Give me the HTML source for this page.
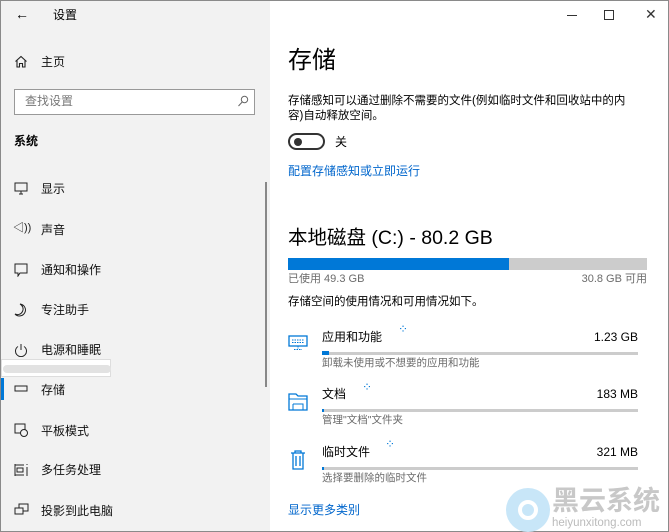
<!DOCTYPE html>
<html><head><meta charset="utf-8"><style>
*{margin:0;padding:0;box-sizing:border-box}
body{width:669px;height:532px;overflow:hidden;font-family:"Liberation Sans","Noto Sans CJK SC",sans-serif;color:#000;position:relative;background:#fff}
.win{position:absolute;left:0;top:0;width:669px;height:532px;border:1px solid #8a8a8a}
.left{position:absolute;left:1px;top:1px;width:269px;height:530px;background:#f2f2f2}
.right{position:absolute;left:270px;top:1px;width:398px;height:530px;background:#fff}
.t{position:absolute;white-space:nowrap;line-height:1}
.nav{font-size:12px;color:#111}
.ic{position:absolute}
.gray{color:#6b6b6b}
.blue{color:#0066cc}
</style></head><body>
<div class="win"></div>
<div class="left">
 <div class="t" style="left:14px;top:6px;font-size:14px">&#8592;</div>
 <div class="t" style="left:52px;top:8px;font-size:12px">设置</div>
 <svg class="ic" style="left:13px;top:54px" width="14" height="13"><path d="M1.5 6.5L7 1.5 12.5 6.5M3 5.5V12H5.5V8.5H8.5V12H11V5.5" fill="none" stroke="#222" stroke-width="1.1"/></svg>
 <div class="t nav" style="left:40px;top:55px">主页</div>
 <div style="position:absolute;left:13px;top:88px;width:241px;height:26px;border:1.5px solid #999;background:#fff"></div>
 <div class="t" style="left:24px;top:94px;font-size:12px;color:#777">查找设置</div>
 <svg class="ic" style="left:236px;top:94px" width="12" height="13"><circle cx="7.5" cy="4.5" r="3.2" fill="none" stroke="#666"/><path d="M5.2 7L1.5 11" stroke="#666"/></svg>
 <div class="t" style="left:13px;top:134px;font-size:12px;font-weight:bold">系统</div>
 <svg class="ic" style="left:13px;top:181px" width="14" height="13"><rect x="1" y="1" width="12" height="8" fill="none" stroke="#222"/><path d="M7 9V12M5 12H9" stroke="#222"/></svg>
 <div class="t nav" style="left:40px;top:182px">显示</div>
 <div class="t" style="left:12px;top:222px;font-size:11px;color:#222">&#9665;))</div>
 <div class="t nav" style="left:40px;top:223px">声音</div>
 <svg class="ic" style="left:13px;top:262px" width="14" height="14"><path d="M1 1H13V10H6L4 13V10H1Z" fill="none" stroke="#222"/></svg>
 <div class="t nav" style="left:40px;top:263px">通知和操作</div>
 <svg class="ic" style="left:13px;top:302px" width="14" height="14"><path d="M6 1A6 6 0 1 1 1 11 5 5 0 0 0 6 1Z" fill="none" stroke="#222"/></svg>
 <div class="t nav" style="left:40px;top:303px">专注助手</div>
 <svg class="ic" style="left:13px;top:342px" width="14" height="14"><path d="M4 3.5A5.5 5.5 0 1 0 10 3.5M7 1V7" fill="none" stroke="#222"/></svg>
 <div class="t nav" style="left:40px;top:343px">电源和睡眠</div>
 <div style="position:absolute;left:0;top:358px;width:110px;height:18px;background:#fff;border:1px solid #ddd"></div>
 <div style="position:absolute;left:2px;top:364px;width:108px;height:8px;background:#e2e2e2;border-radius:4px"></div>
 <div style="position:absolute;left:0;top:377px;width:3px;height:22px;background:#0078d7"></div>
 <svg class="ic" style="left:13px;top:384px" width="14" height="8"><rect x="1" y="1" width="12" height="5" fill="none" stroke="#222"/></svg>
 <div class="t nav" style="left:40px;top:383px">存储</div>
 <svg class="ic" style="left:13px;top:422px" width="15" height="15"><rect x="1" y="1" width="10" height="9" fill="none" stroke="#222"/><circle cx="10" cy="10" r="3.5" fill="#f2f2f2" stroke="#222"/></svg>
 <div class="t nav" style="left:40px;top:424px">平板模式</div>
 <svg class="ic" style="left:13px;top:462px" width="15" height="14"><path d="M1 1V13M1 2H10M1 12H10M3 5H9V9H3ZM13 1V2M13 4V13" fill="none" stroke="#222"/></svg>
 <div class="t nav" style="left:40px;top:463px">多任务处理</div>
 <svg class="ic" style="left:13px;top:502px" width="15" height="13"><rect x="5" y="1" width="9" height="7" fill="none" stroke="#222"/><rect x="1" y="5" width="8" height="6" fill="#f2f2f2" stroke="#222"/></svg>
 <div class="t nav" style="left:40px;top:504px">投影到此电脑</div>
 <div style="position:absolute;left:264px;top:181px;width:2px;height:205px;background:#888"></div>
</div>
<div class="right">
 <div style="position:absolute;left:297px;top:14px;width:10px;height:1px;background:#333"></div>
 <div style="position:absolute;left:334px;top:9px;width:10px;height:10px;border:1px solid #333"></div>
 <div class="t" style="left:375px;top:6px;font-size:14px;color:#333">✕</div>
 <div class="t" style="left:18px;top:48px;font-size:24px">存储</div>
 <div class="t" style="left:18px;top:95px;font-size:11.5px">存储感知可以通过删除不需要的文件(例如临时文件和回收站中的内</div>
 <div class="t" style="left:18px;top:110px;font-size:11.5px">容)自动释放空间。</div>
 <div style="position:absolute;left:18px;top:132px;width:37px;height:17px;border:2px solid #333;border-radius:9px"></div>
 <div style="position:absolute;left:24px;top:137px;width:8px;height:8px;background:#333;border-radius:50%"></div>
 <div class="t" style="left:65px;top:135px;font-size:12px">关</div>
 <div class="t blue" style="left:18px;top:164px;font-size:12px">配置存储感知或立即运行</div>
 <div class="t" style="left:18px;top:228px;font-size:19.5px">本地磁盘 (C:) - 80.2 GB</div>
 <div style="position:absolute;left:18px;top:257px;width:359px;height:12px;background:#ccc"></div>
 <div style="position:absolute;left:18px;top:257px;width:221px;height:12px;background:#0078d7"></div>
 <div class="t gray" style="left:18px;top:273px;font-size:11px">已使用 49.3 GB</div>
 <div class="t gray" style="right:21px;top:273px;font-size:11px">30.8 GB 可用</div>
 <div class="t" style="left:18px;top:296px;font-size:11.5px">存储空间的使用情况和可用情况如下。</div>

 <svg class="ic" style="left:18px;top:334px" width="20" height="16"><rect x="1" y="1" width="18" height="10" fill="none" stroke="#0078d7" stroke-width="1.3"/><path d="M4 5H16M4 7.5H16M10 11V14M6 14.5H14" stroke="#0078d7" stroke-dasharray="1.5 1"/></svg>
 <div class="t" style="left:52px;top:330px;font-size:12px">应用和功能</div>
 <div class="t" style="left:128px;top:322px;font-size:12px;color:#0078d7">⁘</div>
 <div class="t" style="right:30px;top:330px;font-size:12px">1.23 GB</div>
 <div style="position:absolute;left:52px;top:351px;width:316px;height:3px;background:#ccc"></div>
 <div style="position:absolute;left:52px;top:350px;width:7px;height:4px;background:#0078d7"></div>
 <div class="t gray" style="left:52px;top:357px;font-size:10.5px">卸载未使用或不想要的应用和功能</div>

 <svg class="ic" style="left:18px;top:392px" width="20" height="18"><path d="M1 1H8L10 3H19V17H1Z" fill="none" stroke="#0078d7" stroke-width="1.3"/><path d="M1 6H19M5 11H15V17M5 17V11" fill="none" stroke="#0078d7"/></svg>
 <div class="t" style="left:52px;top:387px;font-size:12px">文档</div>
 <div class="t" style="left:92px;top:380px;font-size:12px;color:#0078d7">⁘</div>
 <div class="t" style="right:30px;top:387px;font-size:12px">183 MB</div>
 <div style="position:absolute;left:52px;top:408px;width:316px;height:3px;background:#ccc"></div>
 <div style="position:absolute;left:52px;top:408px;width:2px;height:3px;background:#0078d7"></div>
 <div class="t gray" style="left:52px;top:414px;font-size:10.5px">管理"文档"文件夹</div>

 <svg class="ic" style="left:20px;top:449px" width="16" height="20"><path d="M1 3H15M5 3V1H11V3M3 3V19H13V3M6 6V16M10 6V16" fill="none" stroke="#0078d7" stroke-width="1.3"/></svg>
 <div class="t" style="left:52px;top:445px;font-size:12px">临时文件</div>
 <div class="t" style="left:115px;top:437px;font-size:12px;color:#0078d7">⁘</div>
 <div class="t" style="right:30px;top:445px;font-size:12px">321 MB</div>
 <div style="position:absolute;left:52px;top:466px;width:316px;height:3px;background:#ccc"></div>
 <div style="position:absolute;left:52px;top:466px;width:2px;height:3px;background:#0078d7"></div>
 <div class="t gray" style="left:52px;top:472px;font-size:10.5px">选择要删除的临时文件</div>

 <div class="t blue" style="left:18px;top:503px;font-size:12px">显示更多类别</div>
 <div style="position:absolute;left:236px;top:487px;width:44px;height:44px;border-radius:50%;background:#c8e6f8"></div>
 <div style="position:absolute;left:248px;top:499px;width:20px;height:20px;border-radius:50%;border:4px solid #fff"></div>
 <div class="t" style="left:282px;top:487px;font-size:27px;font-weight:bold;color:#c8c8c8">黑云系统</div>
 <div class="t" style="left:282px;top:517px;font-size:11.5px;color:#bbb">heiyunxitong.com</div>
</div>
</body></html>
